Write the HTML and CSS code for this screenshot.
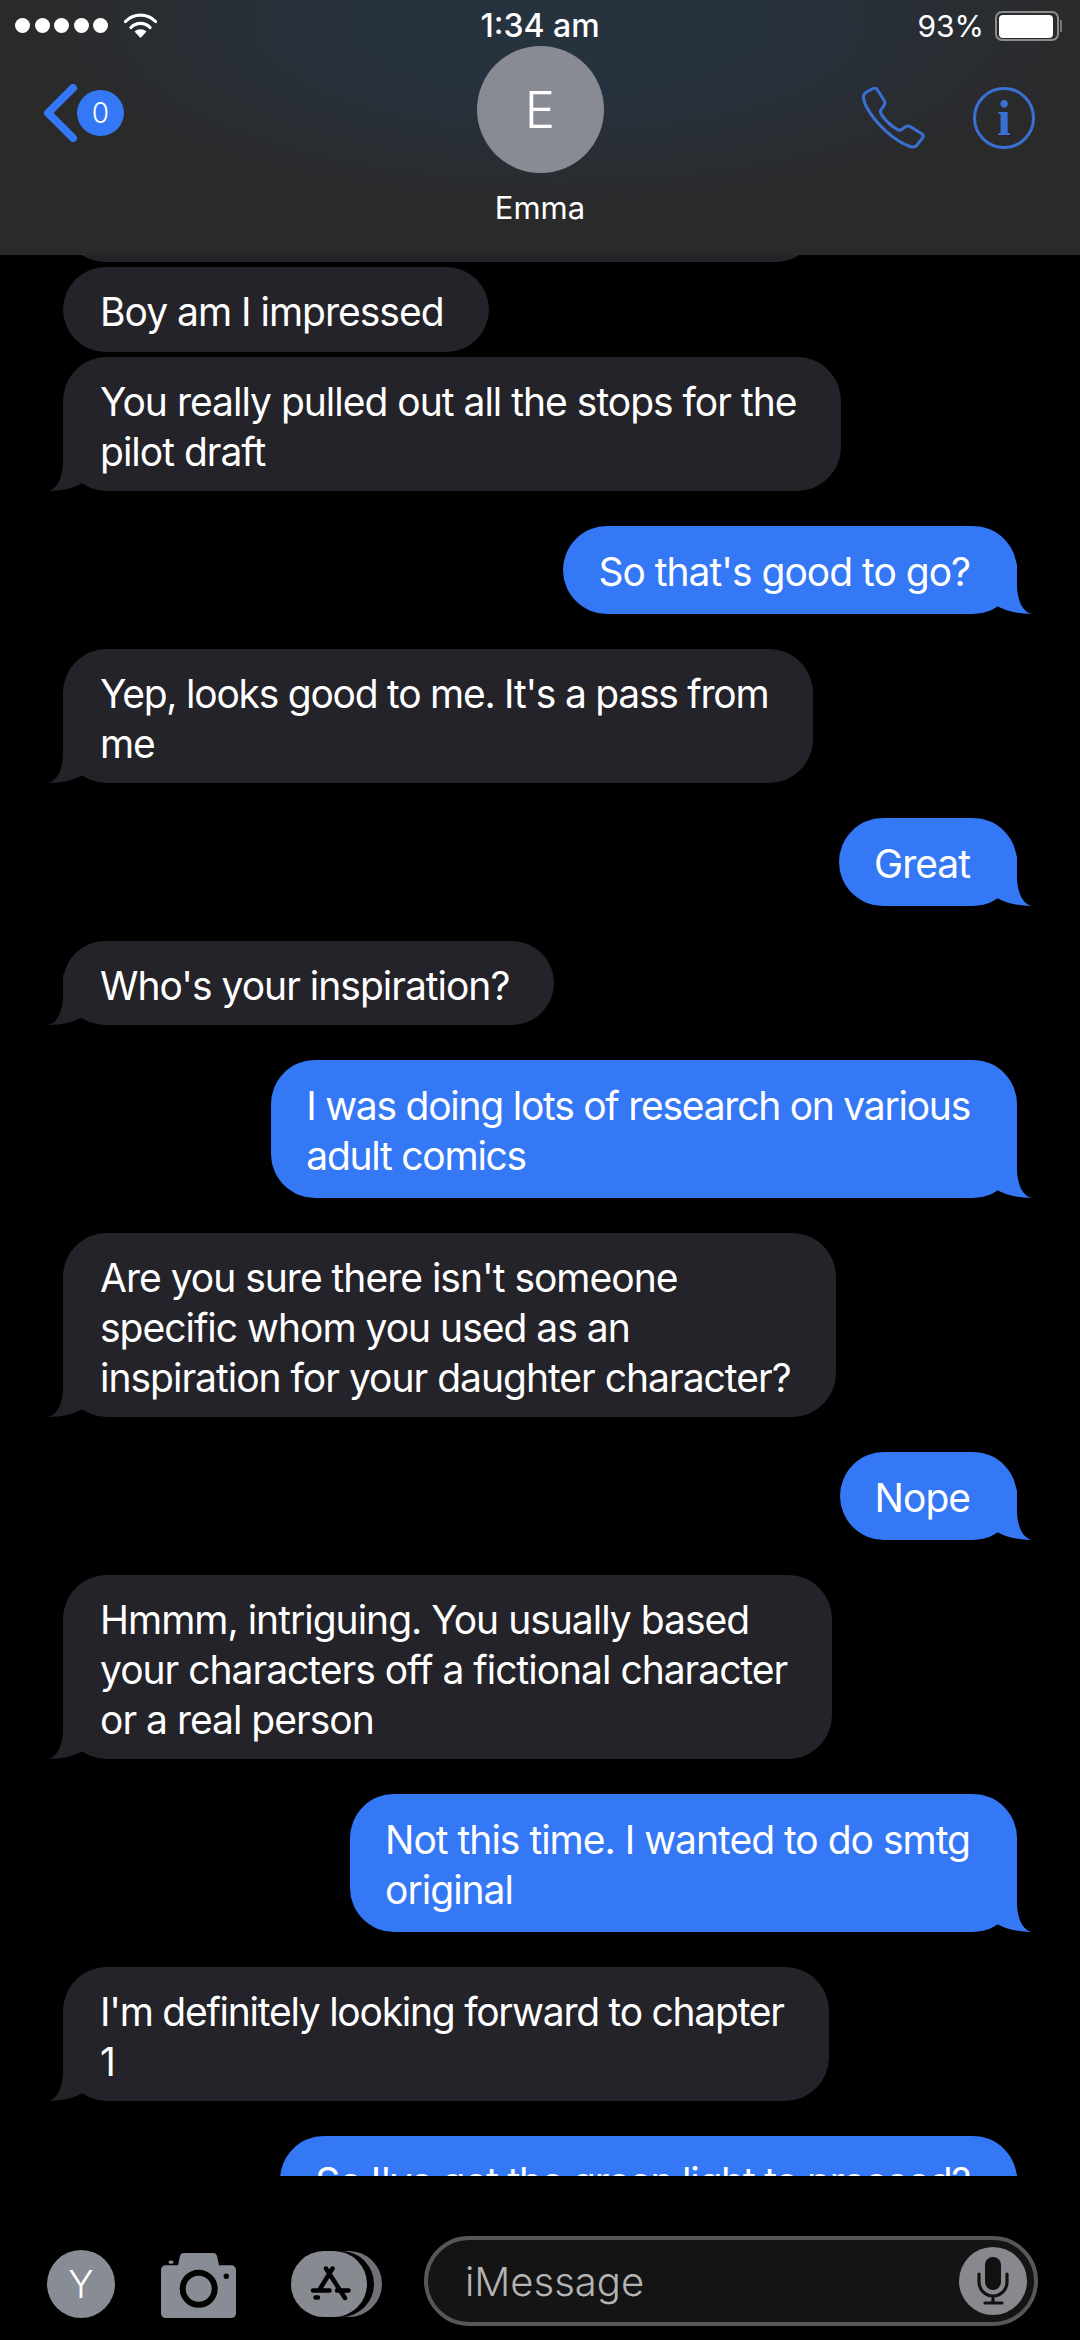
FILE: index.html
```html
<!DOCTYPE html>
<html lang="en">
  <head>
    <meta charset="UTF-8" />
    <meta name="viewport" content="width=device-width, initial-scale=1.0" />
    <title>Emma</title>
    <link rel="stylesheet" href="styles.css">
  </head>
  <body>
    <div id="app">
      <header id="header">
        <div id="status">
          <div class="status-left">
            <span class="dot"></span><span class="dot"></span><span class="dot"></span><span class="dot"></span><span class="dot"></span>
            <svg class="wifi" viewBox="0 0 33 25" width="33" height="25">
              <path d="M1.5 8.5A21 21 0 0 1 31.5 8.5M7 14.5A13 13 0 0 1 26 14.5" fill="none" stroke="#fff" stroke-width="3.2" stroke-linecap="round" />
              <path d="M16.5 25L10.5 18.5A9 9 0 0 1 22.5 18.5Z" fill="#fff" />
            </svg>
          </div>
          <div class="time">1:34 am</div>
          <div class="status-right">
            <span class="percent">93%</span>
            <span class="battery"><span class="battery-fill"></span></span>
          </div>
        </div>
        <div id="nav">
          <div class="back">
            <svg viewBox="0 0 36 58" width="36" height="58">
              <path d="M31 4L6 29L31 54" fill="none" stroke="#3478f6" stroke-width="8" stroke-linecap="round" stroke-linejoin="round" />
            </svg>
            <span class="badge">0</span>
          </div>
          <div class="contact">
            <div class="avatar">E</div>
            <div class="name">Emma</div>
          </div>
          <div class="actions">
            <svg viewBox="0 0 63 62" width="63" height="62">
              <path d="M11 1.5C13 .5 14.5 1.5 15.5 3L22.5 14C23.5 16 23 17.5 21 20L18.5 23.5C18 25 19 27 20 28.5C24 34 30 39.5 35.5 42.5C37 43.5 38 43.5 39.5 42.5L44 39.5C46 38.5 47 38.5 49 40L60 47C61.5 48.5 61.5 50 60.5 51L55 58C53.5 60 51 60.5 48 59.5C33 54 14 38 4 19C1.5 14 1 9 2 7.5C3 5.5 8 3 11 1.5Z" fill="none" stroke="#3a70d4" stroke-width="3" stroke-linejoin="round" />
            </svg>
            <div class="info">i</div>
          </div>
        </div>
      </header>

      <main id="messages">
        <div class="bubble them first"></div>
        <div class="bubble them joined">Boy am I impressed</div>
        <div class="bubble them joined tail">You really pulled out all the stops for the<br>pilot draft</div>
        <div class="bubble me tail">So that's good to go?</div>
        <div class="bubble them tail tight">Yep, looks good to me. It's a pass from<br>me</div>
        <div class="bubble me tail">Great</div>
        <div class="bubble them tail">Who's your inspiration?</div>
        <div class="bubble me tail tight">I was doing lots of research on various<br>adult comics</div>
        <div class="bubble them tail">Are you sure there isn't someone<br>specific whom you used as an<br>inspiration for your daughter character?</div>
        <div class="bubble me tail">Nope</div>
        <div class="bubble them tail">Hmmm, intriguing. You usually based<br>your characters off a fictional character<br>or a real person</div>
        <div class="bubble me tail">Not this time. I wanted to do smtg<br>original</div>
        <div class="bubble them tail tight">I'm definitely looking forward to chapter<br>1</div>
        <div class="bubble me tail tight">So I've got the green light to proceed?</div>
      </main>

      <footer id="composer">
        <div class="me-avatar">Y</div>
        <svg class="camera" viewBox="0 0 75 65" width="75" height="65">
          <path d="M23 0H52C54 0 55.500 1 56 3L58 12.300H70C73 12.300 75 14.300 75 17.300V60C75 63 73 65 70 65H5C2 65 0 63 0 60V17.300C0 14.300 2 12.300 5 12.300H17L19 3C19.500 1 21 0 23 0Z" fill="#888c95" />
          <rect x="7.500" y="7.500" width="5" height="3.200" rx="1.600" fill="#888c95" />
          <circle cx="37.700" cy="35.700" r="16" fill="#888c95" stroke="#000" stroke-width="6" />
          <circle cx="65.300" cy="23.300" r="2.700" fill="#000" />
        </svg>
        <svg class="apps" viewBox="0 0 91 66" width="91" height="66">
          <rect width="91" height="66" rx="33" fill="#6f7378" />
          <rect width="83" height="66" rx="33" fill="#000" />
          <rect width="76" height="66" rx="33" fill="#888a92" />
          <path d="M41.500 17.500L28 39.500M35 17.500L54 47M22 39.500H38.500M46 39.500H57.500M24.500 46.500H27" fill="none" stroke="#000" stroke-width="4.500" stroke-linecap="round" />
        </svg>
        <div class="input">
          <span class="placeholder">iMessage</span>
          <svg class="mic" viewBox="0 0 68 68" width="68" height="68">
            <circle cx="34" cy="34" r="34" fill="#88888e" />
            <rect x="26" y="10" width="16" height="33" rx="8" fill="#111" />
            <path d="M20 27V35A14 14 0 0 0 48 35V27M34 49V55M26 56H43" fill="none" stroke="#111" stroke-width="3.200" stroke-linecap="round" />
          </svg>
        </div>
      </footer>
    </div>
  </body>
</html>
```
FILE: styles.css
```css
body {
  font-family: Inter, "Liberation Sans", sans-serif;
  margin: 0;
  padding: 0;
  background-color: #000;
  color: #fff;
}
#app {
  display: flex;
  flex-direction: column;
  height: 2340px;
  overflow: hidden;
}

/* Header */
#header {
  flex: none;
  height: 255px;
  background: radial-gradient(ellipse 520px 190px at 560px 20px, #27323f 0%, #27323f 35%, #2a2a2b 100%), #2a2a2b;
}
#status {
  display: grid;
  grid-template-columns: 1fr auto 1fr;
  align-items: center;
  box-sizing: border-box;
  height: 46px;
  padding: 5px 15px 0;
}
.status-left {
  display: flex;
  align-items: center;
  gap: 4.5px;
}
.dot {
  width: 15px;
  height: 15px;
  border-radius: 50%;
  background-color: #fff;
}
.wifi {
  margin-left: 11px;
}
.time {
  font-size: 32px;
  font-weight: 500;
}
.status-right {
  display: flex;
  align-items: center;
  justify-content: flex-end;
  gap: 11px;
  padding-right: 6px;
}
.percent {
  font-size: 30px;
}
.battery {
  position: relative;
  box-sizing: border-box;
  width: 64px;
  height: 30px;
  padding: 2px 4px 1px 2px;
  border: 2px solid #8c8c8c;
  border-radius: 7px;
}
.battery::after {
  content: "";
  position: absolute;
  right: -5px;
  top: 7px;
  width: 2px;
  height: 12px;
  background-color: #777;
}
.battery-fill {
  display: block;
  height: 100%;
  border-radius: 4px;
  background-color: #fff;
}
#nav {
  display: grid;
  grid-template-columns: 1fr auto 1fr;
  align-items: start;
}
.back {
  display: flex;
  align-items: center;
  margin: 38px 0 0 42px;
}
.badge {
  display: flex;
  align-items: center;
  justify-content: center;
  width: 47px;
  height: 46px;
  margin-left: -1px;
  border-radius: 50%;
  background-color: #3478f6;
  font-size: 28px;
  font-weight: 300;
}
.contact {
  display: flex;
  flex-direction: column;
  align-items: center;
}
.avatar {
  display: flex;
  align-items: center;
  justify-content: center;
  width: 127px;
  height: 127px;
  border-radius: 50%;
  background-color: #888b94;
  font-size: 51px;
  font-weight: 300;
}
.name {
  margin-top: 17px;
  font-size: 31px;
  line-height: 36px;
}
.actions {
  display: flex;
  justify-content: flex-end;
  gap: 48px;
  margin: 41px 45px 0 0;
}
.info {
  display: flex;
  align-items: center;
  justify-content: center;
  box-sizing: border-box;
  width: 62px;
  height: 62px;
  border: 3px solid #3a70d4;
  border-radius: 50%;
  color: #3a70d4;
  font-family: "Liberation Serif", serif;
  font-size: 50px;
  font-weight: 700;
}

/* Messages */
#messages {
  flex: 1;
  min-height: 0;
  overflow: hidden;
  display: flex;
  flex-direction: column;
  padding: 0 63px;
}
.bubble {
  position: relative;
  flex: none;
  box-sizing: border-box;
  width: fit-content;
  margin-top: 34.5px;
  border-radius: 44px;
  font-size: 39px;
  line-height: 50px;
  letter-spacing: -1px;
  white-space: nowrap;
}
.bubble.tight {
  letter-spacing: -1.25px;
}
.them {
  padding: 20px 45px 14.5px 37px;
  background-color: #242329;
}
.me {
  align-self: flex-end;
  padding: 21.5px 47px 17px 35px;
  background-color: #3478f6;
}
.bubble.first {
  width: 755px;
  height: 84px;
  margin-top: -77px;
}
.bubble.joined {
  margin-top: 5px;
}
.tail::after {
  content: "";
  position: absolute;
  bottom: 0;
  width: 40px;
  height: 50px;
  background-color: inherit;
}
.me.tail::after {
  right: -15px;
  clip-path: path("M25 0L25 20C25 35 30 48 40 50C26 50 14 47 5 42L0 0Z");
}
.them.tail::after {
  left: -15px;
  clip-path: path("M15 0L15 20C15 35 10 48 0 50C14 50 26 47 35 42L40 0Z");
}

/* Composer */
#composer {
  flex: none;
  display: flex;
  align-items: flex-start;
  height: 164px;
  box-sizing: border-box;
  padding: 60px 0 0 47px;
}
.me-avatar {
  display: flex;
  align-items: center;
  justify-content: center;
  width: 68px;
  height: 68px;
  margin-top: 14px;
  border-radius: 50%;
  background-color: #888c95;
  font-size: 38px;
  font-weight: 300;
}
.camera {
  margin: 17px 0 0 46px;
}
.apps {
  margin: 15px 0 0 55px;
}
.input {
  display: flex;
  align-items: center;
  box-sizing: border-box;
  width: 614px;
  height: 90px;
  margin-left: 42px;
  padding: 0 7px 0 37px;
  border: 4px solid #575757;
  border-radius: 45px;
  background-color: #141414;
}
.placeholder {
  font-size: 40px;
  font-weight: 300;
  color: #b4b4b4;
}
.mic {
  margin-left: auto;
}
```
